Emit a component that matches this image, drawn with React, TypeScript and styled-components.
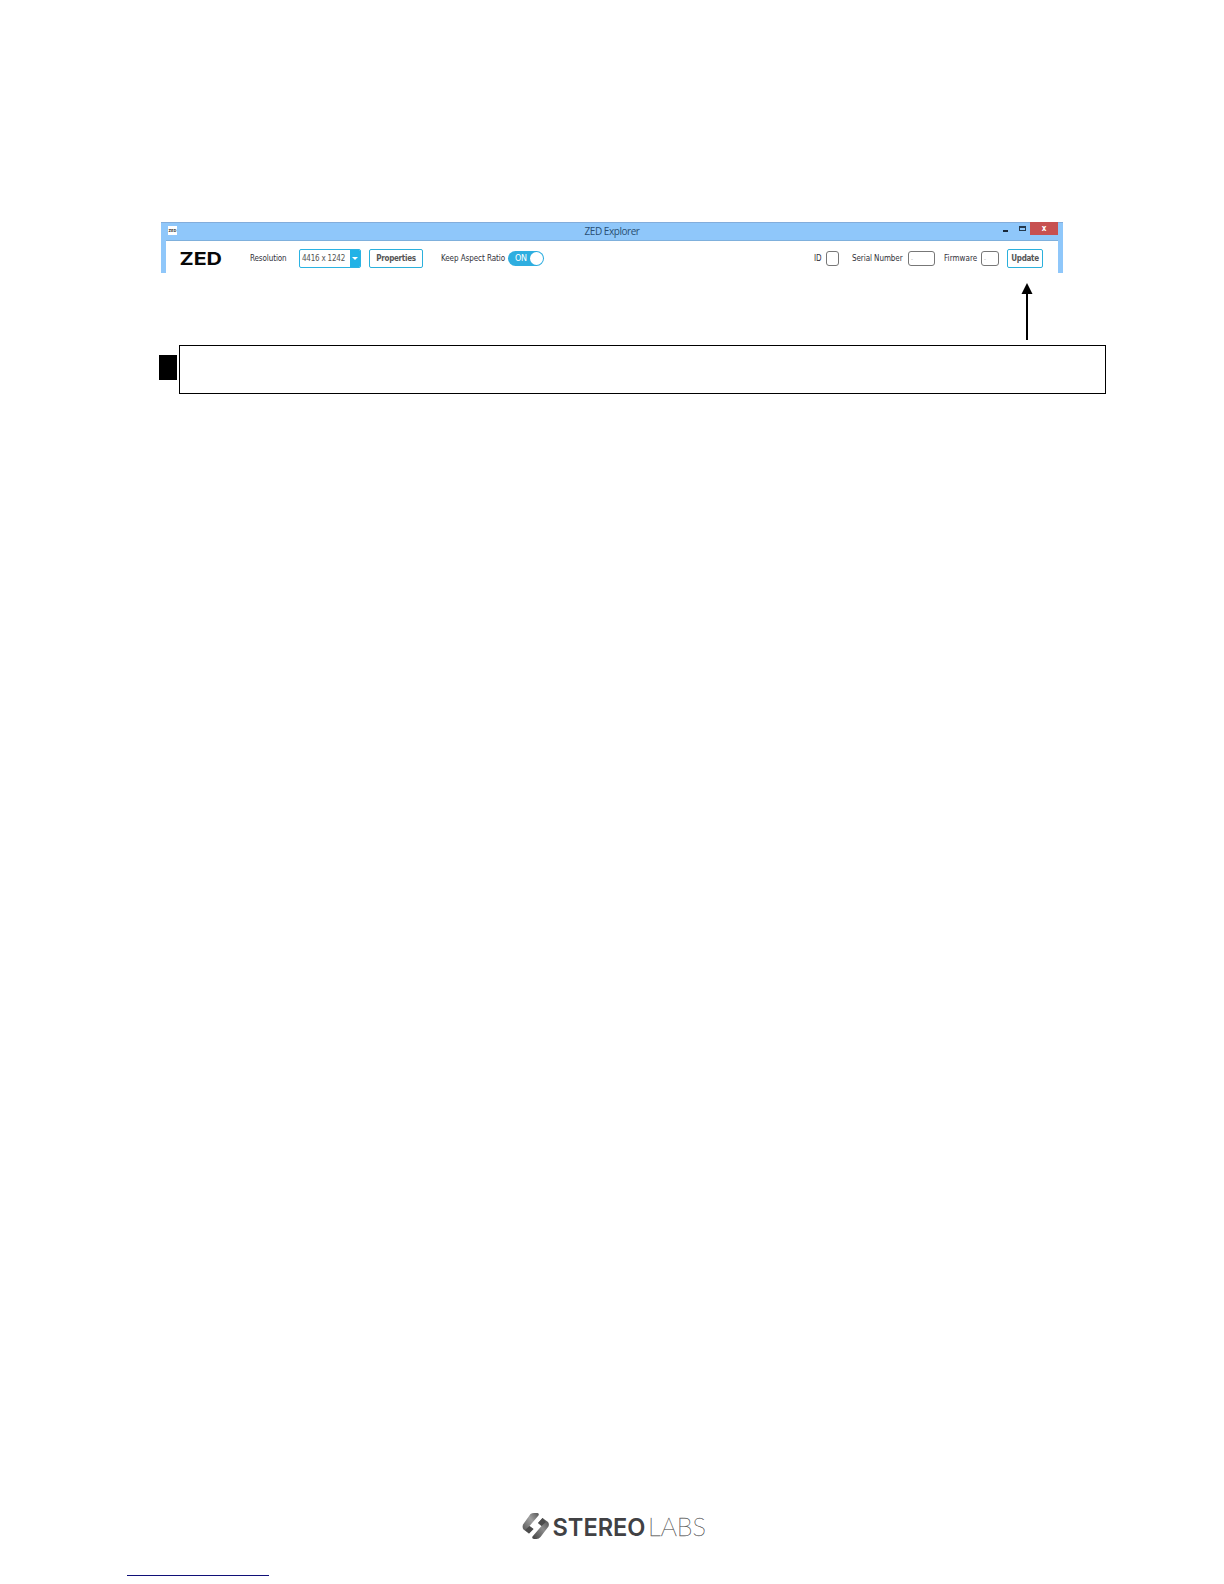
import styled, { createGlobalStyle } from "styled-components";


function App() {
  return (
    <>
      <GlobalStyle />
      <Page>
        <Window>
          <TitleBar>
            <AppIcon>ZED</AppIcon>
            <Title>ZED Explorer</Title>
            <Controls>
              <Minimize />
              <Maximize />
              <Close>x</Close>
            </Controls>
          </TitleBar>
          <Toolbar>
            <Brand viewBox="0 0 42 14">
              <text x="-0.5" y="13" textLength="42.5" lengthAdjust="spacingAndGlyphs">ZED</text>
            </Brand>
            <Label $left={28} $width={49} $spacing={-0.1}>Resolution</Label>
            <Select>
              <SelectValue>4416 x 1242</SelectValue>
              <SelectArrow><Caret /></SelectArrow>
            </Select>
            <Button $left={8} $width={54}>Properties</Button>
            <Label $left={18} $width={67} $spacing={-0.07}>Keep Aspect Ratio</Label>
            <Toggle>ON<Knob /></Toggle>
            <Label $left={270} $width={12}>ID</Label>
            <Field $width={13} />
            <Label $left={13} $width={56} $spacing={-0.08}>Serial Number</Label>
            <Field $width={27}>-</Field>
            <Label $left={9} $width={37} $spacing={0.05}>Firmware</Label>
            <Field $width={18}>-</Field>
            <Button $left={8} $width={36}>Update</Button>
          </Toolbar>
        </Window>
        <Arrow viewBox="0 0 12 57">
          <path d="M6 10V57" stroke="#000" strokeWidth="2" />
          <path d="M6 0L11.5 11H0.5Z" />
        </Arrow>
        <Callout>
          <Marker />
          <CalloutBox />
        </Callout>
        <Footer>
          <Logo />
          <LinkLine />
        </Footer>
      </Page>
    </>
  );
}

const Logo = () => (
  <LogoSvg viewBox="0 0 184 30">
    <defs>
      <linearGradient id="logo-left" x1="1" y1="0" x2="0" y2="1">
        <stop offset="0%" stopColor="#555" />
        <stop offset="40%" stopColor="#a0a0a0" />
        <stop offset="70%" stopColor="#777" />
        <stop offset="100%" stopColor="#4a4a4a" />
      </linearGradient>
      <linearGradient id="logo-right" x1="1" y1="0" x2="0" y2="1">
        <stop offset="0%" stopColor="#4a4a4a" />
        <stop offset="45%" stopColor="#8c8c8c" />
        <stop offset="100%" stopColor="#404040" />
      </linearGradient>
    </defs>
    <path fill="url(#logo-left)" d="M8.5 2Q10 1 12 1H15.5Q17.5 1.500 16.500 3.500L7.500 14L11.500 17L7 21.500L1.500 17.500Q0 15.500 1 12.500Z" />
    <path fill="#4c4c4c" d="M7.500 14L11.500 17L7 21.500L3 18Z" />
    <path fill="url(#logo-right)" d="M20.500 6L26 10Q27.500 12 26.500 14.500L18.500 25Q17 27 14.500 27H12Q9.500 26.500 10.500 24.500L19.500 14L16 11Z" />
    <path fill="#4c4c4c" d="M20.500 6L24 10L19.500 14L16 11Z" />
    <LogoBold x="30.5" y="24" textLength="93" lengthAdjust="spacingAndGlyphs">STEREO</LogoBold>
    <LogoThin x="126" y="24" textLength="58" lengthAdjust="spacingAndGlyphs">LABS</LogoThin>
  </LogoSvg>
);

const GlobalStyle = createGlobalStyle`
    body {
        margin: 0;
        background: #fff;
    }

    * {
        box-sizing: border-box;
    }
`

const Page = styled.div`
    display: flex;
    flex-direction: column;
    width: 1224px;
    height: 1584px;
    padding-top: 222px;
    overflow: hidden;
    background: #fff;
    font-family: "DejaVu Sans Condensed", "DejaVu Sans", sans-serif;
`

const Window = styled.div`
    width: 902px;
    height: 51px;
    margin-left: 161px;
    padding: 0 5px;
    background: #8fc7fa;
    box-shadow: inset 0 1px #83addb;
`

const TitleBar = styled.div`
    display: grid;
    grid-template-columns: 100px 1fr 100px;
    height: 19px;
    border-bottom: 1px solid #7fb0dc;
`

const AppIcon = styled.div`
    width: 9px;
    height: 9px;
    margin: 4px 0 0 2px;
    background: #fff;
    color: #444;
    font-size: 4px;
    font-weight: bold;
    line-height: 9px;
    text-align: center;
`

const Title = styled.div`
    color: #294f73;
    font: 10px/19px "Open Sans", sans-serif;
    letter-spacing: -0.45px;
    text-align: center;
`

const Controls = styled.div`
    display: flex;
    justify-content: flex-end;
`

const Minimize = styled.div`
    width: 5px;
    height: 2px;
    margin: 8px 11px 0 0;
    background: #17283a;
`

const Maximize = styled.div`
    width: 7px;
    height: 5px;
    margin: 4px 4px 0 0;
    border: 1px solid #25394d;
    border-top-width: 2px;
`

const Close = styled.div`
    width: 28px;
    height: 13px;
    background: #c75050;
    color: #fff;
    font-size: 8px;
    font-weight: bold;
    line-height: 13px;
    text-align: center;
`

const Toolbar = styled.div`
    display: flex;
    align-items: center;
    height: 32px;
    padding: 3px 0 0 14px;
    background: #fff;
`

const Brand = styled.svg`
    flex: none;
    width: 42px;
    height: 14px;
    margin-top: 1px;
    overflow: visible;
    fill: #080808;
    font: 700 17.5px Inter, sans-serif;
`

const Label = styled.div<{ $left: number; $width: number; $spacing?: number }>`
    flex: none;
    width: ${p => p.$width}px;
    margin-left: ${p => p.$left}px;
    color: #303038;
    font-size: 8px;
    letter-spacing: ${p => p.$spacing ?? -0.15}px;
    line-height: 12px;
    white-space: nowrap;
`

const Select = styled.div`
    display: flex;
    flex: none;
    width: 62px;
    height: 19px;
    border: 1px solid #2bb3e3;
    border-radius: 2px;
    overflow: hidden;
`

const SelectValue = styled.div`
    flex: 1;
    padding-left: 2px;
    color: #555;
    font-size: 8px;
    line-height: 17px;
    letter-spacing: -0.22px;
    white-space: nowrap;
`

const SelectArrow = styled.div`
    display: flex;
    align-items: center;
    justify-content: center;
    width: 10px;
    background: #22b2e6;
`

const Caret = styled.div`
    border: 3px solid transparent;
    border-top: 3px solid #fff;
    border-bottom: 0;
`

const Button = styled.div<{ $left: number; $width: number }>`
    flex: none;
    width: ${p => p.$width}px;
    height: 19px;
    margin-left: ${p => p.$left}px;
    border: 1px solid #2bb0dc;
    border-radius: 2px;
    color: #555;
    font-size: 8px;
    font-weight: bold;
    letter-spacing: -0.3px;
    line-height: 17px;
    text-align: center;
`

const Toggle = styled.div`
    display: flex;
    flex: none;
    align-items: center;
    justify-content: space-between;
    width: 36px;
    height: 15px;
    padding: 0 1px 0 7px;
    border-radius: 8px;
    background: #2eaee0;
    color: #fff;
    font: 8px "DejaVu Sans", sans-serif;
    letter-spacing: -0.4px;
`

const Knob = styled.div`
    width: 13px;
    height: 13px;
    border-radius: 50%;
    background: #fff;
`

const Field = styled.div<{ $width: number }>`
    flex: none;
    width: ${p => p.$width}px;
    height: 15px;
    padding-left: 2px;
    border: 1px solid #777;
    border-radius: 3px;
    color: #aaa;
    font-size: 6px;
    line-height: 13px;
`

const Arrow = styled.svg`
    flex: none;
    width: 12px;
    height: 57px;
    margin: 10px 0 0 1021px;
`

const Callout = styled.div`
    display: flex;
    flex: none;
    align-items: flex-start;
    margin: 5px 0 0 159px;
`

const Marker = styled.div`
    width: 18px;
    height: 25px;
    margin-top: 10px;
    background: #000;
`

const CalloutBox = styled.div`
    width: 927px;
    height: 49px;
    margin-left: 2px;
    border: 1px solid #000;
`

const Footer = styled.div`
    margin-top: auto;
`

const LogoSvg = styled.svg`
    display: block;
    width: 184px;
    height: 30px;
    margin-left: 522px;
`

const LogoBold = styled.text`
    fill: #414144;
    font: 600 24.5px Inter, sans-serif;
`

const LogoThin = styled.text`
    fill: #222;
    font: 100 25px Lato, sans-serif;
    stroke: #666;
    stroke-width: 0.3px;
`

const LinkLine = styled.div`
    width: 142px;
    height: 1px;
    margin: 33px 0 8px 127px;
    background: #101078;
`

export default App;
